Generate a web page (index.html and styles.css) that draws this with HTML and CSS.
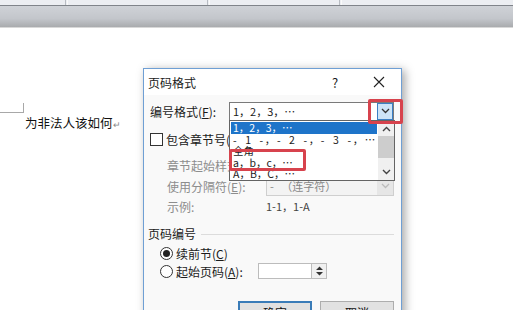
FILE: index.html
```html
<!DOCTYPE html>
<html lang="zh-CN">
<head>
    <meta charset="UTF-8">
    <title>页码格式</title>
    <link rel="stylesheet" href="styles.css">
</head>
<body>
 <div class="screen">
    <div class="ribbon">
        <span class="tab tab-1"></span>
        <span class="tab tab-2"></span>
        <span class="tab tab-3"></span>
    </div>
    <div class="toolbar"></div>

    <div class="doc">
        <div class="corner"></div>
        <p class="doc-line">为非法人该如何<span class="mark">↵</span></p>

        <div class="dialog">
            <div class="titlebar">
                <span class="title">页码格式</span>
                <span class="help">?</span>
                <span class="close">
                    <svg width="12" height="12" viewBox="0 0 12 12"><path d="M1 1 L11 11 M11 1 L1 11" stroke="#222" stroke-width="1.1"/></svg>
                </span>
            </div>

            <div class="body">
                <div class="row row-format">
                    <label class="lbl lbl-wide">编号格式(<u>F</u>):</label>
                    <div class="select">
                        <span class="select-text">1，2，3，⋯</span>
                        <span class="drop-btn">
                            <svg width="9" height="6" viewBox="0 0 9 6"><path d="M1 1 L4.5 4.5 L8 1" fill="none" stroke="#333" stroke-width="1.3"/></svg>
                        </span>
                    </div>
                </div>

                <div class="row row-check">
                    <span class="checkbox"></span>
                    <label class="lbl">包含章节号(<u>N</u>)</label>
                </div>

                <div class="row row-sub row-chapter">
                    <label class="lbl lbl-sub muted">章节起始样式(<u>P</u>):</label>
                </div>

                <div class="row row-sub row-sep">
                    <label class="lbl lbl-sub muted">使用分隔符(<u>E</u>):</label>
                    <div class="select select-off">
                        <span class="select-text">-&nbsp;&nbsp;&nbsp;（连字符）</span>
                        <span class="drop-btn drop-off">
                            <svg width="9" height="6" viewBox="0 0 9 6"><path d="M1 1 L4.5 4.5 L8 1" fill="none" stroke="#bbb" stroke-width="1.3"/></svg>
                        </span>
                    </div>
                </div>

                <div class="row row-sub row-sample">
                    <label class="lbl lbl-sub muted">示例:</label>
                    <span class="sample">1-1，1-A</span>
                </div>

                <div class="row row-group">
                    <span class="group-title">页码编号</span>
                    <span class="group-line"></span>
                </div>

                <div class="row row-radio">
                    <span class="radio checked"></span>
                    <label class="lbl">续前节(<u>C</u>)</label>
                </div>

                <div class="row row-radio row-start">
                    <span class="radio"></span>
                    <label class="lbl lbl-start">起始页码(<u>A</u>):</label>
                    <span class="num-input"></span>
                    <span class="spinner">
                        <svg width="9" height="12" viewBox="0 0 9 12"><path d="M1 5 L4.5 1.5 L8 5 Z M1 7 L4.5 10.5 L8 7 Z" fill="#333"/></svg>
                    </span>
                </div>

                <div class="row row-buttons">
                    <button class="btn btn-ok">确定</button>
                    <button class="btn">取消</button>
                </div>
            </div>

            <ul class="droplist">
                <li class="picked">1，2，3，⋯</li>
                <li class="wide">- 1 -，- 2 -，- 3 -，⋯</li>
                <li>全角 ⋯</li>
                <li>a，b，c，⋯</li>
                <li>A，B，C，⋯</li>
            </ul>
            <div class="scrollbar">
                <svg width="9" height="6" viewBox="0 0 9 6"><path d="M1 5 L4.5 1.5 L8 5" fill="none" stroke="#444" stroke-width="1.4"/></svg>
                <span class="thumb"></span>
                <svg width="9" height="6" viewBox="0 0 9 6"><path d="M1 1 L4.5 4.5 L8 1" fill="none" stroke="#444" stroke-width="1.4"/></svg>
            </div>

            <div class="hl hl-drop"></div>
            <div class="hl hl-item"></div>
        </div>
    </div>
 </div>
</body>
</html>
```

FILE: styles.css
```css
* {
    box-sizing: border-box;
}

body {
    margin: 0;
    background: #fff;
    font-family: "Noto Sans CJK SC", "Noto Sans", sans-serif;
    font-size: 12px;
    color: #1b1b1b;
}

.screen {
    width: 513px;
    height: 310px;
    overflow: hidden;
    position: relative;
}

.ribbon {
    height: 6px;
    background: #eceef2;
    border-bottom: 1px solid #80848a;
    position: relative;
}

.tab {
    position: absolute;
    top: 0;
    width: 3px;
    height: 5px;
    border-left: 1px solid #b8bcc2;
    border-right: 1px solid #fafafa;
}

.tab-1 { left: 65px; }
.tab-2 { left: 207px; }
.tab-3 { left: 339px; }

.toolbar {
    height: 22px;
    background: linear-gradient(#cfd2d7, #c3c6cb 60%, #a9abae);
    border-bottom: 1px solid #d8d8d8;
}

.doc {
    position: relative;
    height: 282px;
}

.corner {
    position: absolute;
    left: 0;
    top: 75px;
    width: 24px;
    height: 10px;
    border-right: 1px solid #a8a8a8;
    border-bottom: 1px solid #a8a8a8;
}

.doc-line {
    margin: 0;
    padding: 86px 0 0 25px;
    font-size: 12.5px;
    line-height: 18px;
    color: #111;
}

.mark {
    font-size: 9px;
    color: #888;
}

.dialog {
    position: absolute;
    left: 143px;
    top: 40px;
    width: 259px;
    height: 270px;
    background: #f9f9f9;
    border: 1px solid #6f9fd4;
    box-shadow: 3px 2px 9px rgba(0, 0, 0, 0.35);
}

.titlebar {
    height: 26px;
    background: #fff;
    display: flex;
    align-items: center;
    padding: 0 0 0 4px;
}

.title {
    flex: 1;
}

.help {
    width: 16px;
    font-size: 13px;
    margin-right: 28px;
    text-align: center;
}

.close {
    width: 16px;
    height: 12px;
    margin-right: 14px;
    display: flex;
    justify-content: center;
}

.body {
    padding: 6px 7px 0 6px;
    display: flex;
    flex-direction: column;
}

.row {
    display: flex;
    align-items: center;
    height: 18px;
}

.lbl u {
    text-decoration: underline;
}

.lbl-wide {
    width: 79px;
}

.row-format {
    height: 20px;
}

.select {
    flex: 1;
    height: 19px;
    background: #fff;
    border: 1px solid #7a7a7a;
    display: flex;
    align-items: center;
    font-family: "Noto Sans CJK SC", serif;
    font-size: 11px;
}

.select-text {
    flex: 1;
    padding-left: 3px;
    white-space: nowrap;
}

.drop-btn {
    width: 16px;
    height: 17px;
    background: #cde4f7;
    border: 1px solid #3c7fc4;
    display: flex;
    align-items: center;
    justify-content: center;
}

.row-check {
    margin-top: 9px;
}

.checkbox {
    width: 13px;
    height: 13px;
    border: 1px solid #333;
    background: #fff;
    margin-right: 3px;
}

.row-sub {
    padding-left: 17px;
}

.lbl-sub {
    width: 99px;
}

.muted {
    color: #8d8d8d;
}

.row-chapter {
    margin-top: 8px;
}

.row-sep {
    margin-top: 3px;
}

.select-off {
    background: #f3f3f3;
    border-color: #cfcfcf;
    color: #888;
}

.drop-off {
    background: #e6e6e6;
    border: none;
    height: 17px;
}

.row-sample {
    margin-top: 2px;
}

.sample {
    font-size: 11px;
    color: #444;
}

.row-group {
    margin-top: 9px;
}

.group-title {
    margin-left: -2px;
    margin-right: 5px;
}

.group-line {
    flex: 1;
    border-top: 1px solid #dcdcdc;
    margin-top: 2px;
}

.row-radio {
    padding-left: 10px;
    margin-top: 2px;
}

.radio {
    width: 13px;
    height: 13px;
    border: 1px solid #333;
    border-radius: 50%;
    background: #fff;
    margin-right: 3px;
    display: flex;
    align-items: center;
    justify-content: center;
}

.radio.checked::after {
    content: "";
    width: 7px;
    height: 7px;
    border-radius: 50%;
    background: #222;
}

.row-start {
    margin-top: 0;
}

.lbl-start {
    width: 82px;
}

.num-input {
    width: 54px;
    height: 16px;
    background: #fff;
    border: 1px solid #bcbcbc;
}

.spinner {
    width: 15px;
    height: 16px;
    background: #f0f0f0;
    border: 1px solid #bcbcbc;
    border-left: none;
    display: flex;
    align-items: center;
    justify-content: center;
}

.row-buttons {
    margin-top: 21px;
    height: 22px;
    justify-content: flex-end;
    gap: 8px;
    align-items: flex-start;
}

.btn {
    width: 74px;
    height: 22px;
    background: #e1e1e1;
    border: 1px solid #adadad;
    font-family: inherit;
    font-size: 12px;
    color: #111;
    padding: 0;
}

.btn-ok {
    border: 2px solid #3a7cb8;
}

.droplist {
    position: absolute;
    left: 85px;
    top: 51px;
    width: 166px;
    height: 61px;
    margin: 0;
    padding: 1px 17px 0 1px;
    list-style: none;
    background: #fff;
    border: 1px solid #646464;
    font-family: "Noto Sans CJK SC", serif;
    font-size: 10.5px;
    line-height: 11.6px;
    overflow: hidden;
}

.droplist li {
    padding-left: 2px;
    white-space: nowrap;
}

.droplist .wide {
    word-spacing: 3px;
    letter-spacing: 1.6px;
}

.droplist .picked {
    background: #1e74c9;
    color: #fff;
}

.scrollbar {
    position: absolute;
    left: 234px;
    top: 52px;
    width: 16px;
    height: 59px;
    background: #f0f0f0;
    display: flex;
    flex-direction: column;
    align-items: center;
    justify-content: space-between;
    padding: 5px 0 5px;
}

.thumb {
    width: 16px;
    height: 22px;
    background: #cdcdcd;
    margin-top: -8px;
}

.hl {
    position: absolute;
    border: 3px solid #d7434d;
    border-radius: 2px;
}

.hl-drop {
    left: 224px;
    top: 30px;
    width: 35px;
    height: 25px;
}

.hl-item {
    left: 85px;
    top: 80px;
    width: 77px;
    height: 22px;
}
```
